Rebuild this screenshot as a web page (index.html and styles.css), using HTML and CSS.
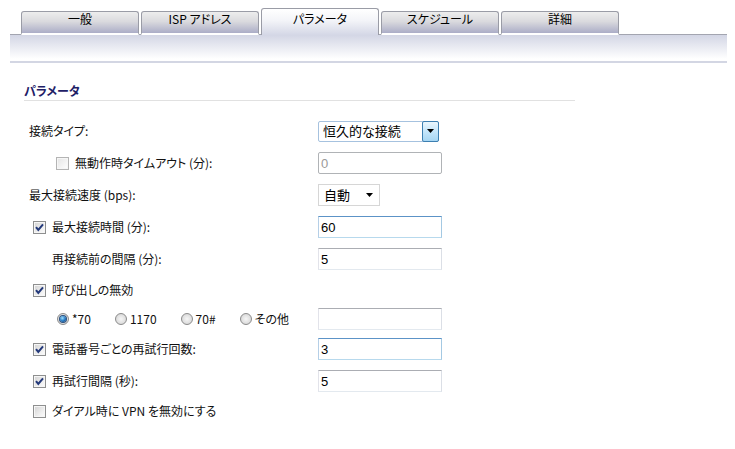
FILE: index.html
```html
<!DOCTYPE html>
<html lang="ja">
<head>
<meta charset="utf-8">
<title>パラメータ</title>
<link rel="stylesheet" href="styles.css">
</head>
<body>
<div class="tabs">
  <div class="tab">一般</div>
  <div class="tab">ISP アドレス</div>
  <div class="tab active">パラメータ</div>
  <div class="tab">スケジュール</div>
  <div class="tab">詳細</div>
</div>
<div class="band"></div>

<div class="section">
  <div class="section-title">パラメータ</div>
  <div class="form">
    <div class="row">
      <div class="label">接続タイプ:</div>
      <div class="select type">
        <span class="val">恒久的な接続</span>
        <span class="btn"><svg width="7" height="4" viewBox="0 0 7 4"><path d="M0 0H7L3.5 4Z" fill="#000"/></svg></span>
      </div>
    </div>
    <div class="row">
      <div class="label l2"><span class="cb dim"></span>無動作時タイムアウト (分):</div>
      <input class="field" type="text" value="0" disabled>
    </div>
    <div class="row">
      <div class="label">最大接続速度 (bps):</div>
      <div class="select speed">
        <span class="val">自動</span>
        <svg class="arrow" width="7" height="4" viewBox="0 0 7 4"><path d="M0 0H7L3.5 4Z" fill="#000"/></svg>
      </div>
    </div>
    <div class="row">
      <div class="label l1"><span class="cb"><svg width="11" height="11" viewBox="0 0 11 11"><path d="M2 5.2L4.3 8L9 2.3" stroke="#23397a" stroke-width="2" fill="none"/></svg></span>最大接続時間 (分):</div>
      <input class="field hot" type="text" value="60">
    </div>
    <div class="row">
      <div class="label l1t">再接続前の間隔 (分):</div>
      <input class="field" type="text" value="5">
    </div>
    <div class="row h30">
      <div class="label l1"><span class="cb"><svg width="11" height="11" viewBox="0 0 11 11"><path d="M2 5.2L4.3 8L9 2.3" stroke="#23397a" stroke-width="2" fill="none"/></svg></span>呼び出しの無効</div>
    </div>
    <div class="row h28">
      <div class="label radios">
        <span class="opt"><span class="radio on"><span class="dot"></span></span>*70</span>
        <span class="opt"><span class="radio"></span>1170</span>
        <span class="opt"><span class="radio"></span>70#</span>
        <span class="opt"><span class="radio"></span>その他</span>
      </div>
      <input class="field" type="text" value="">
    </div>
    <div class="row">
      <div class="label l1"><span class="cb"><svg width="11" height="11" viewBox="0 0 11 11"><path d="M2 5.2L4.3 8L9 2.3" stroke="#23397a" stroke-width="2" fill="none"/></svg></span>電話番号ごとの再試行回数:</div>
      <input class="field hot" type="text" value="3">
    </div>
    <div class="row">
      <div class="label l1"><span class="cb"><svg width="11" height="11" viewBox="0 0 11 11"><path d="M2 5.2L4.3 8L9 2.3" stroke="#23397a" stroke-width="2" fill="none"/></svg></span>再試行間隔 (秒):</div>
      <input class="field" type="text" value="5">
    </div>
    <div class="row h28">
      <div class="label l1"><span class="cb"></span>ダイアル時に VPN を無効にする</div>
    </div>
  </div>
</div>
</body>
</html>
```
FILE: styles.css
```css
* { box-sizing: border-box; }

body {
  margin: 0;
  background: #fff;
  font-family: "Noto Sans CJK JP", "Noto Sans", sans-serif;
  font-size: 12px;
  color: #111;
  font-feature-settings: "palt";
}

/* tabs */
.tabs {
  display: flex;
  align-items: flex-end;
  gap: 2px;
  padding-top: 8px;
  margin-left: 21px;
  margin-bottom: -1px;
  position: relative;
  z-index: 1;
}
.tab {
  width: 118px;
  height: 24px;
  border: 1px solid #9a9ca6;
  border-bottom: 2px solid #fff;
  border-radius: 3px 3px 0 0;
  background: linear-gradient(#ededed, #dadade 45%, #abadc7);
  text-align: center;
  line-height: 14px;
  color: #000;
}
.tab.active {
  height: 27px;
  padding-top: 3px;
  border-bottom: 0;
  background: linear-gradient(#ffffff, #f3f4f8 45%, #d4d7e6);
}

.band {
  margin-left: 10px;
  width: 717px;
  height: 29px;
  border-top: 1px solid #a3a5b0;
  border-bottom: 2px solid #d3d6e3;
  background: linear-gradient(#d3d6e5, #fff 92%);
}

/* section */
.section {
  margin: 21px 0 0 24px;
  width: 551px;
}
.section-title {
  font-weight: 700;
  color: #1e2066;
  line-height: 14px;
  padding-bottom: 2px;
  border-bottom: 1px solid #e1e1e1;
}
.form {
  margin-top: 14px;
  padding-left: 5px;
}
.row {
  display: flex;
  align-items: center;
  height: 32px;
}
.row.h30 { height: 30px; }
.row.h28 { height: 28px; }

.label {
  width: 289px;
  flex: none;
  display: flex;
  align-items: center;
  line-height: 14px;
}
.l1 { padding-left: 4px; }
.l1t { padding-left: 23px; }
.l2 { padding-left: 27px; }

/* checkbox */
.cb {
  width: 13px;
  height: 13px;
  flex: none;
  margin-right: 6px;
  border: 1px solid #8e8f8f;
  box-shadow: inset 0 0 0 1px #f6f6f6;
  background: linear-gradient(135deg, #d2d2d2, #eeeeee 60%, #fdfdfd);
  display: flex;
  align-items: center;
  justify-content: center;
}
.cb.dim {
  border-color: #b4b4b4;
  background: linear-gradient(135deg, #e4e4e4, #f4f4f4 60%, #fff);
}

/* radios */
.radios {
  padding-left: 28px;
  gap: 24px;
}
.opt {
  display: flex;
  align-items: center;
}
.radio {
  width: 12px;
  height: 12px;
  flex: none;
  margin-right: 3px;
  border-radius: 50%;
  border: 1px solid #8b8b8b;
  background: radial-gradient(circle at 50% 50%, #f6f6f6, #d0d0d0);
  display: flex;
  align-items: center;
  justify-content: center;
}
.dot {
  width: 6px;
  height: 6px;
  border-radius: 50%;
  background: radial-gradient(circle at 40% 35%, #9fe0ff, #1f74c0 55%, #0c3466);
  box-shadow: 0 0 0 1px #2a4f7e;
}

/* selects */
.select {
  display: flex;
  align-items: center;
  background: #fff;
  font-size: 13px;
  line-height: 16px;
  color: #000;
}
.select .val { flex: 1; }
.select.type {
  width: 121px;
  height: 21px;
  border: 1px solid #a6c2df;
  border-radius: 2px;
}
.select.type .val { padding-left: 4px; }
.select .btn {
  width: 17px;
  height: calc(100% + 2px);
  margin: -1px -1px -1px 0;
  border: 1px solid #3c7fb1;
  border-radius: 2px;
  background: linear-gradient(#eaf6fd, #c4e6fb 50%, #a6d6f3);
  display: flex;
  align-items: center;
  justify-content: center;
}
.select.speed {
  width: 62px;
  height: 22px;
  border: 1px solid #d6d6d6;
}
.select.speed .val { padding-left: 5px; }
.select.speed .arrow { margin-right: 6px; }

/* text fields */
.field {
  width: 124px;
  height: 22px;
  margin: 0;
  padding: 0 2px;
  border: 1px solid;
  border-color: #abadb3 #dbdfe6 #e3e9ef #e2e3ea;
  background: #fff;
  font: 13px "Liberation Sans", Arial, sans-serif;
  color: #000;
  outline: none;
}
.field.hot {
  border-color: #5c93c7 #a4c9e3 #b7d9ed #b5cfe7;
}
.field:disabled {
  border-color: #b0b3b6;
  border-radius: 2px;
  color: #9a9a9a;
  background: #fff;
}
```
